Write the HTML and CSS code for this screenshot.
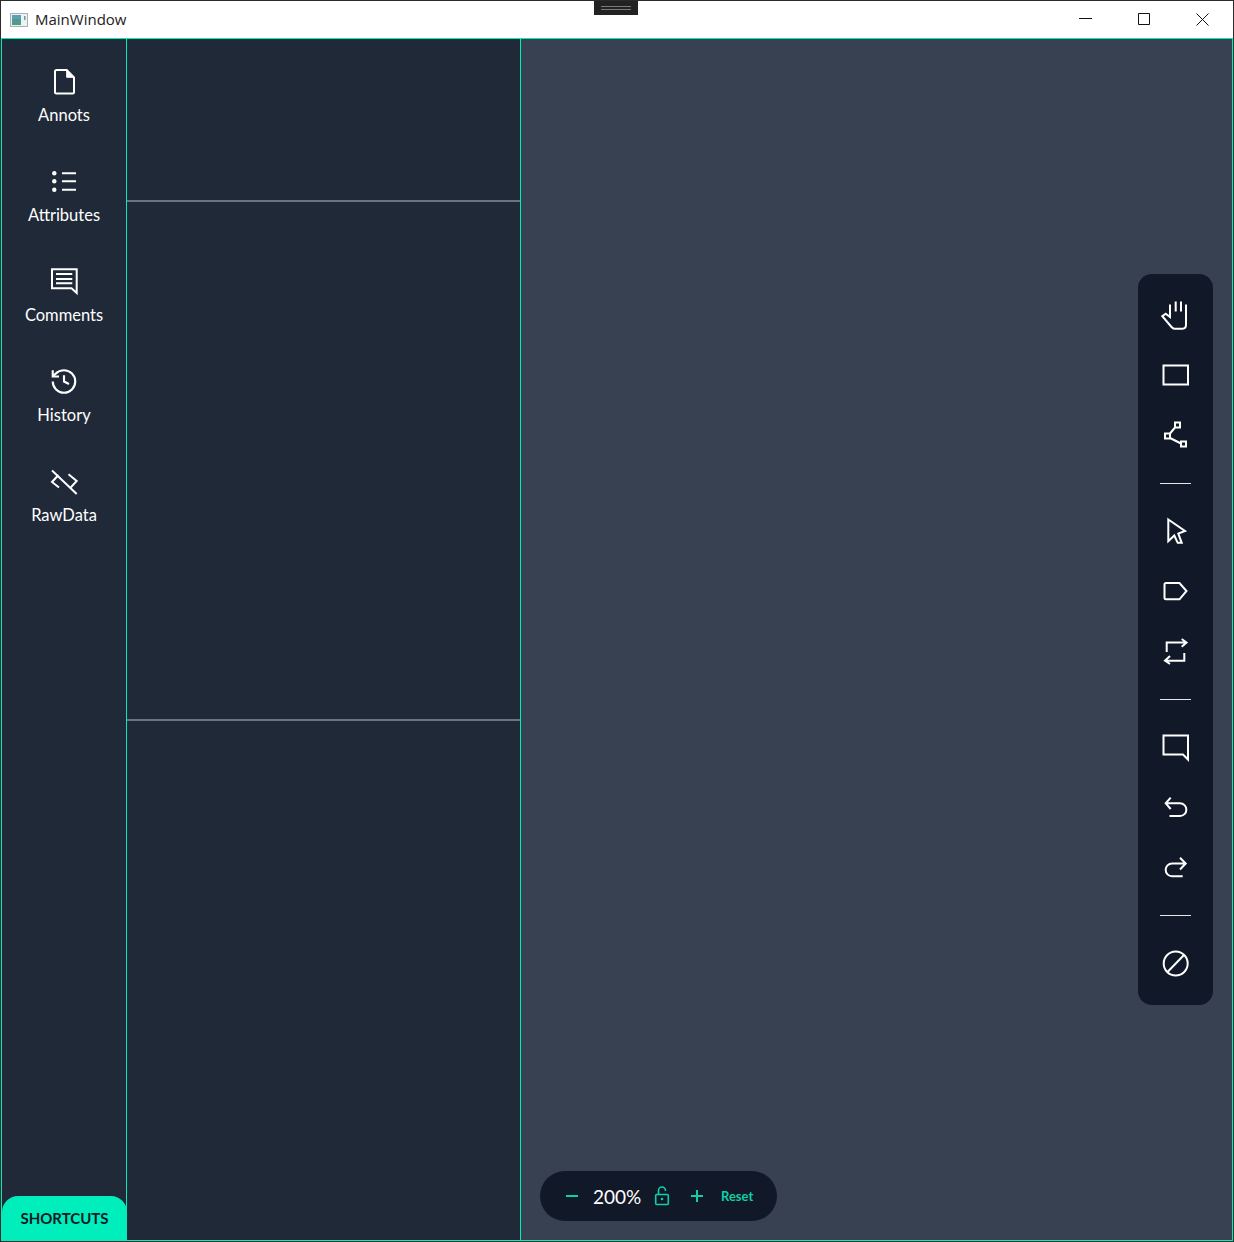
FILE: index.html
```html
<!DOCTYPE html>
<html lang="en">
<head>
<meta charset="utf-8">
<title>MainWindow</title>
<link rel="stylesheet" href="styles.css">
</head>
<body>
<div class="window">
  <header class="titlebar">
    <svg class="app-icon" width="18" height="14" viewBox="0 0 18 14">
      <rect x="0" y="0" width="18" height="14" fill="#a9b0b3"/>
      <rect x="1" y="1" width="16" height="12" fill="#eef1f1"/>
      <rect x="2" y="2" width="9" height="10" fill="#4f9a8a"/>
      <rect x="2" y="2" width="9" height="4" fill="#5f9fb5"/>
      <rect x="14" y="3" width="1.5" height="4" fill="#6f9aa0"/>
    </svg>
    <span class="title">MainWindow</span>
    <div class="controls">
      <span class="control control-min"><svg width="13" height="13" viewBox="0 0 13 13"><path class="win" d="M0 5.500H13"/></svg></span>
      <span class="control"><svg width="13" height="13" viewBox="0 0 13 13"><path class="win" d="M1.500 0.500H12.500V11.500H1.500Z"/></svg></span>
      <span class="control"><svg width="13" height="13" viewBox="0 0 13 13"><path class="win" d="M0.500 0.500L12.500 12.500M12.500 0.500L0.500 12.500"/></svg></span>
    </div>
    <div class="grip"><span class="grip-lines"></span></div>
  </header>
  <main class="workspace">
    <nav class="sidebar">
      <div class="nav-list">
        <a class="nav-item">
          <svg class="nav-icon" width="28" height="30" viewBox="0 0 28 30"><path d="M6.500 3H16.700L24 10.300V25q0 1.500-1.500 1.500H6.500Q5 26.500 5 25V4.500Q5 3 6.500 3Z"/><path class="fold" d="M16.700 3L24 10.300H16.700Z"/></svg>
          <span class="nav-label">Annots</span>
        </a>
        <a class="nav-item">
          <svg class="nav-icon" width="28" height="30" viewBox="0 0 28 30"><circle class="dot" cx="4.300" cy="6.300" r="2.200"/><circle class="dot" cx="4.300" cy="14.300" r="2.200"/><circle class="dot" cx="4.300" cy="22.700" r="2.200"/><path d="M12 6.300H26M12 14.300H26M12 22.700H26"/></svg>
          <span class="nav-label">Attributes</span>
        </a>
        <a class="nav-item">
          <svg class="nav-icon" width="28" height="30" viewBox="0 0 28 30"><path d="M2 2.300H26.700V26L21.500 21.300H2Z"/><path d="M6 7H22.300M6 12H22.300M6 16.300H22.300"/></svg>
          <span class="nav-label">Comments</span>
        </a>
        <a class="nav-item">
          <svg class="nav-icon thin" width="30" height="30" viewBox="0 0.400 24 24"><path d="M3 12a9 9 0 1 0 9-9 9.750 9.750 0 0 0-6.740 2.740L3 8"/><path d="M3 3v5h5"/><path d="M12 7v5l4 2"/></svg>
          <span class="nav-label">History</span>
        </a>
        <a class="nav-item">
          <svg class="nav-icon" width="28" height="30" viewBox="0 0 28 30"><path d="M8.500 8L2 15L9 20.500M18.500 7.300L26.700 14L20.700 20.500M2 3.500L26.700 27"/></svg>
          <span class="nav-label">RawData</span>
        </a>
      </div>
      <button class="shortcuts">SHORTCUTS</button>
    </nav>
    <section class="panels">
      <div class="panel panel-top"></div>
      <div class="panel panel-mid"></div>
      <div class="panel panel-bottom"></div>
    </section>
    <section class="canvas">
      <div class="toolbar">
        <span class="tool"><svg class="tool-icon" width="31" height="30" viewBox="0 0 31 30"><path d="M10 4.500V17L5.700 13.800L2.300 16.200L11.500 27Q13 28.700 14.500 28.700H22.500Q26 28.700 26 24.500V4.500M15.700 1.500V11.500M21 1.500V11.500"/></svg></span>
        <span class="tool"><svg class="tool-icon" width="31" height="30" viewBox="0 0 31 30"><path d="M3.500 5.500H28V24.500H3.500Z"/></svg></span>
        <span class="tool"><svg class="tool-icon" width="31" height="30" viewBox="0 0 31 30"><path d="M15 2.500h5v5h-5ZM5 13.500h5v5H5ZM21 21.500h5v5h-5ZM15 7.500L10 13.500M10 18L21 23.500"/></svg></span>
        <span class="divider"></span>
        <span class="tool"><svg class="tool-icon" width="31" height="30" viewBox="0 0 31 30"><path d="M8.300 3.500L25 15L18.300 17.500L21.700 26.800H17.700L14.300 19.500L8.300 25.200Z"/></svg></span>
        <span class="tool"><svg class="tool-icon" width="31" height="30" viewBox="0 0 31 30"><path d="M6 7H19.500L26.500 15L19.500 23.300H6Q4.500 23.300 4.500 21.800V8.500Q4.500 7 6 7Z"/></svg></span>
        <span class="tool"><svg class="tool-icon" width="31" height="30" viewBox="0 0 31 30"><path d="M6.700 16V6.500H26.500M21.700 3L26.500 6.500L21.700 10.700M24.300 17V24.700H5M10 20L5 24.700L10 28"/></svg></span>
        <span class="divider"></span>
        <span class="tool"><svg class="tool-icon" width="31" height="30" viewBox="0 0 31 30"><path d="M3.500 3.500H28V27.500L23 22.500H3.500Z"/></svg></span>
        <span class="tool"><svg class="tool-icon" width="31" height="30" viewBox="0 0 31 30"><path d="M10.700 5.700L5.700 11.300L10.700 17M5.700 11.300H20a6.350 6.350 0 0 1 0 12.700H9.500"/></svg></span>
        <span class="tool"><svg class="tool-icon" width="31" height="30" viewBox="0 0 31 30"><path d="M20 5.800L25.700 11.500L20 17.500M25.700 11.500H12a6.350 6.350 0 0 0 0 12.700H22.700"/></svg></span>
        <span class="divider"></span>
        <span class="tool"><svg class="tool-icon" width="31" height="30" viewBox="0 0 31 30"><circle cx="15.700" cy="15.500" r="12"/><path d="M7.500 24L24 7"/></svg></span>
      </div>
      <div class="zoom-pill">
        <svg class="zoom-minus" width="12" height="12" viewBox="0 0 12 12"><path class="accent" d="M0 6H12"/></svg>
        <span class="zoom-value">200%</span>
        <svg class="zoom-lock" width="18" height="22" viewBox="0 0 18 22"><rect class="accent lock-line" x="2.700" y="9.500" width="12.600" height="10" rx="1"/><path class="accent lock-line" d="M5.500 9V5.500a3.500 3.500 0 0 1 7 0V6"/><circle class="accent-dot" cx="9" cy="14" r="1.300"/></svg>
        <svg class="zoom-plus" width="12" height="12" viewBox="0 0 12 12"><path class="accent" d="M0 6H12M6 0V12"/></svg>
        <span class="zoom-reset">Reset</span>
      </div>
    </section>
  </main>
</div>
</body>
</html>
```

FILE: styles.css
```css
* { box-sizing: border-box; }
html, body { margin: 0; padding: 0; }
body { width: 1234px; height: 1242px; overflow: hidden; background: #1f1f1f; }
.window {
  width: 1234px;
  height: 1242px;
  display: flex;
  flex-direction: column;
  border: 1px solid #2b2b2b;
  position: relative;
}
.titlebar {
  height: 37px;
  background: #fff;
  display: flex;
  align-items: center;
  padding-left: 9px;
  flex: none;
}
.app-icon { flex: none; margin-right: 7px; }
.title {
  font-family: "Open Sans", "Noto Sans", sans-serif;
  font-size: 15px;
  line-height: 20px;
  margin-bottom: 2px;
  color: #222;
}
.controls { margin-left: auto; display: flex; padding-right: 1px; }
.control { width: 59px; height: 37px; display: flex; align-items: center; justify-content: center; }
.control-min { width: 58px; }
.win { fill: none; stroke: #111; stroke-width: 1; }
.grip {
  position: absolute;
  left: 593px;
  top: 0;
  width: 44px;
  height: 14px;
  background: #222;
  display: flex;
  align-items: center;
  justify-content: center;
}
.grip-lines {
  width: 30px;
  height: 4px;
  border-top: 1px solid #7a7a7a;
  border-bottom: 1px solid #7a7a7a;
}
.workspace {
  flex: 1;
  display: flex;
  min-height: 0;
  border: 1px solid #00eebc;
}
.sidebar {
  width: 125px;
  flex: none;
  display: flex;
  flex-direction: column;
  background: #1f2937;
  border-right: 1px solid #00eebc;
}
.nav-list { padding-top: 11px; display: flex; flex-direction: column; flex: 1; }
.nav-item {
  height: 100px;
  padding-top: 17px;
  display: flex;
  flex-direction: column;
  align-items: center;
  gap: 8px;
}
.nav-icon { display: block; fill: none; stroke: #fff; stroke-width: 2; }
.nav-icon.thin { stroke-width: 1.7; }
.nav-icon .fold { fill: #fff; stroke-width: 1; }
.nav-icon .dot { fill: #fff; stroke: none; }
.nav-label {
  font-family: Lato, sans-serif;
  font-size: 16.5px;
  line-height: 20px;
  color: #fff;
}
.shortcuts {
  width: 125px;
  height: 44px;
  border: 0;
  padding: 0;
  border-radius: 16px 16px 0 0;
  background: #00eebc;
  color: #0b1a24;
  font-family: Lato, sans-serif;
  font-weight: 700;
  font-size: 15px;
  flex: none;
}
.panels {
  width: 394px;
  flex: none;
  display: grid;
  grid-template-rows: 163px 519px 1fr;
  background: #1f2937;
  border-right: 1px solid #00eebc;
}
.panel-top, .panel-mid { border-bottom: 2px solid #6b7280; }
.canvas {
  flex: 1;
  position: relative;
  background: #374151;
}
.toolbar {
  position: absolute;
  top: 235px;
  right: 19px;
  width: 75px;
  height: 731px;
  padding-top: 11px;
  display: flex;
  flex-direction: column;
  align-items: center;
  background: #111827;
  border-radius: 14px;
}
.tool { width: 100%; height: 60px; display: flex; align-items: center; justify-content: center; flex: none; }
.tool-icon { display: block; fill: none; stroke: #fff; stroke-width: 2; }
.divider { display: flex; width: 31px; height: 36px; flex: none; position: relative; align-items: center; }
.divider::before { content: ""; width: 100%; height: 1px; background: #e5e7eb; }
.zoom-pill {
  position: absolute;
  left: 19px;
  bottom: 19px;
  width: 237px;
  height: 50px;
  padding-left: 26px;
  display: flex;
  align-items: center;
  background: #111827;
  border-radius: 25px;
}
.accent { fill: none; stroke: #0fcfa5; stroke-width: 2; }
.accent.lock-line { stroke-width: 1.6; }
.accent-dot { fill: #0fcfa5; }
.zoom-minus, .zoom-lock, .zoom-plus { flex: none; }
.zoom-value {
  margin-left: 15px;
  width: 47px;
  font-family: Lato, sans-serif;
  font-size: 19px;
  color: #fff;
}
.zoom-lock { margin-left: 13px; }
.zoom-plus { margin-left: 20px; }
.zoom-reset {
  margin-left: 18px;
  font-family: Lato, sans-serif;
  font-weight: 700;
  font-size: 13px;
  color: #0fcfa5;
}
```
